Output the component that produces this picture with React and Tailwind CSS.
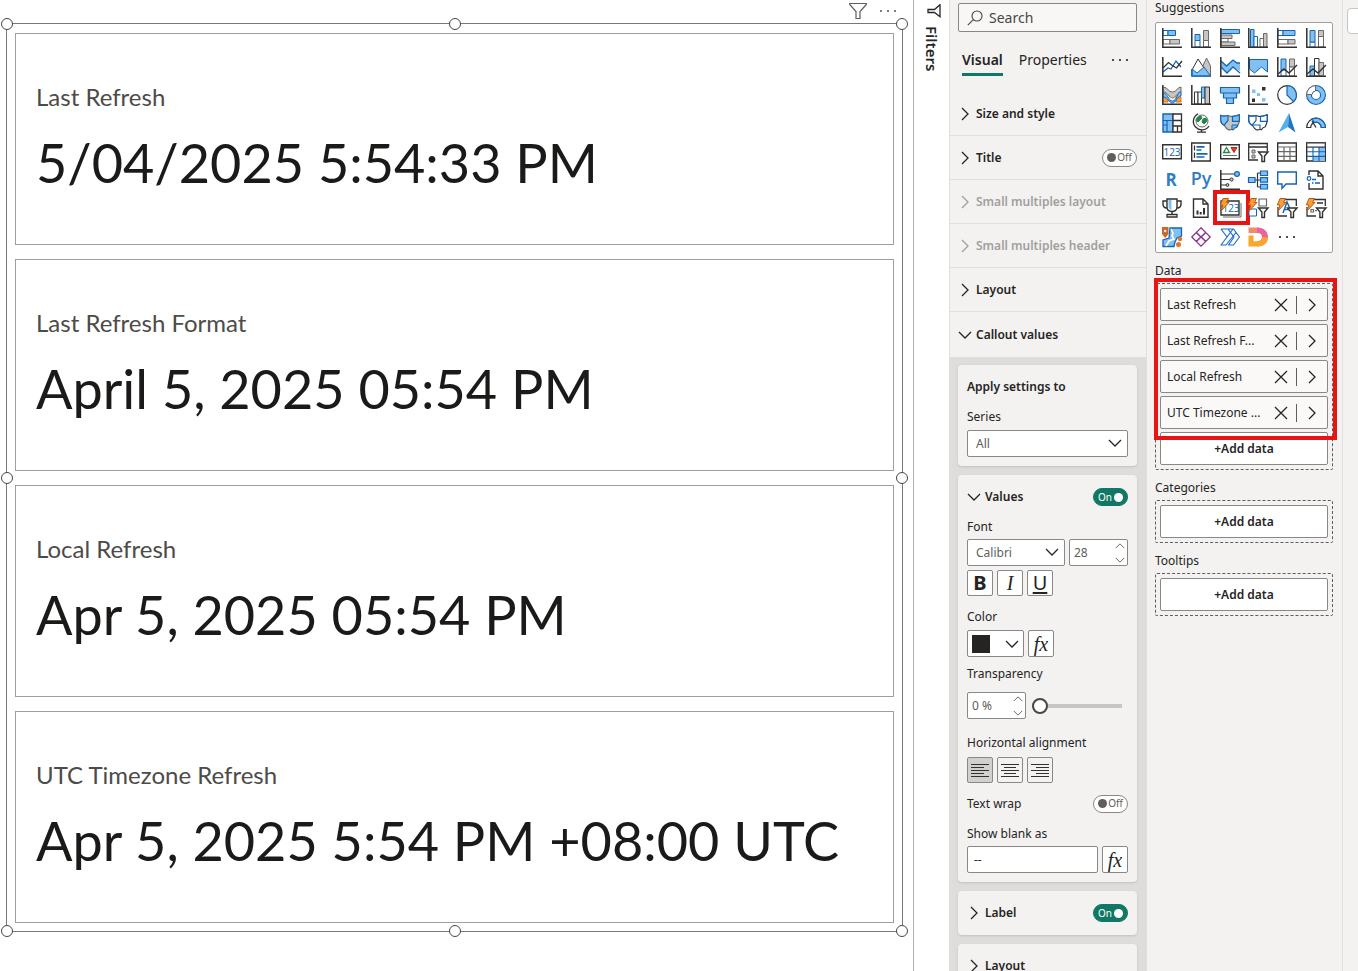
import { useState } from 'react';

const INK = '#323130';
const BLUE = '#1464b4';
const SKY = '#83c0f2';
const GRAY = '#c8c6c4';
const DIM = '#6b6967';
const ORANGE = '#f2a13c';

const Axes = () => <path d="M.8 0v19.2H20" fill="none" stroke={INK} strokeWidth="1.5" />;

const Funnel = () => (
  <path d="M10.5 10h9.500l-3.500 4v5.500h-2.600V14z" fill="#fff" stroke={INK} strokeWidth="1.4" />
);

const Bolt = () => (
  <path d="M3 .5h5.500L6.500 4.500H9L1 13l2-6H.3z" fill={ORANGE} stroke="#c05a12" strokeWidth="1" />
);

const VISUALS = [
  ['Stacked bar chart', <>
    <path d="M1 2.5h5v5H1z" fill="#fff" stroke={BLUE} />
    <path d="M6 2.5h7.5v5H6z" fill={SKY} stroke={BLUE} />
    <path d="M1 11.5h7v4.5H1z" fill="#fff" stroke={DIM} />
    <path d="M8 11.5h9.5v4.5H8z" fill={GRAY} stroke={DIM} />
    <Axes />
  </>],
  ['Stacked column chart', <>
    <path d="M4 12.5h5V19H4z" fill="#fff" stroke={BLUE} />
    <path d="M4 6.5h5v6H4z" fill={SKY} stroke={BLUE} />
    <path d="M12.5 12.5h5V19h-5z" fill="#fff" stroke={DIM} />
    <path d="M12.5 2.5h5v10h-5z" fill={GRAY} stroke={DIM} />
    <Axes />
  </>],
  ['Clustered bar chart', <>
    <path d="M1 1.5h18.5v4H1z" fill={SKY} stroke={BLUE} />
    <path d="M1 7h11v3.500H1z" fill={GRAY} stroke={DIM} />
    <path d="M1 10.500h7V14H1z" fill="#fff" stroke={DIM} />
    <path d="M1 14h14v3.500H1z" fill={GRAY} stroke={DIM} />
    <Axes />
  </>],
  ['Clustered column chart', <>
    <path d="M2.500 1.500H6V19H2.500z" fill={SKY} stroke={BLUE} />
    <path d="M6 8.500h3.500V19H6z" fill="#fff" stroke={BLUE} />
    <path d="M12 10.500h3.500V19H12z" fill="#fff" stroke={DIM} />
    <path d="M15.500 5.500H19V19h-3.500z" fill={GRAY} stroke={DIM} />
    <Axes />
  </>],
  ['100% stacked bar chart', <>
    <path d="M1 2.5h5v5H1z" fill="#fff" stroke={BLUE} />
    <path d="M6 2.5h12v5H6z" fill={SKY} stroke={BLUE} />
    <path d="M1 11.5h10v4.5H1z" fill="#fff" stroke={DIM} />
    <path d="M11 11.5h7v4.5h-7z" fill={GRAY} stroke={DIM} />
    <Axes />
  </>],
  ['100% stacked column chart', <>
    <path d="M4 14h5v5H4z" fill="#fff" stroke={BLUE} />
    <path d="M4 2.5h5V14H4z" fill={SKY} stroke={BLUE} />
    <path d="M12.5 8.5h5V19h-5z" fill="#fff" stroke={DIM} />
    <path d="M12.5 2.5h5v6h-5z" fill={GRAY} stroke={DIM} />
    <Axes />
  </>],
  ['Line chart', <>
    <path d="M1 15l5-4 3 1 5-8 5 6" fill="none" stroke={BLUE} strokeWidth="1.3" />
    <path d="M1 11l5.500-5.500L11 9l3.500 2L20 4" fill="none" stroke={INK} strokeWidth="1.3" />
    <Axes />
  </>],
  ['Area chart', <>
    <path d="M10 13l5.500-12L19.500 9v10z" fill={GRAY} stroke={DIM} />
    <path d="M1 13l6-11 6 9-4 5" fill="#fff" stroke={INK} />
    <path d="M1 12l5 4 7-6 6.500 9H1z" fill={SKY} stroke={BLUE} />
    <path d="M.8 12v7.200H20" fill="none" stroke={BLUE} strokeWidth="1.3" />
  </>],
  ['Stacked area chart', <>
    <path d="M1 4l5.500 5 6.500-6 4 3h3v8l-7-4-6 6-6-6z" fill={SKY} />
    <path d="M1 4l5.500 5 6.500-6 4 3h3M1 10l6 6 6-6 7 6" fill="none" stroke={BLUE} strokeWidth="1.3" />
    <Axes />
  </>],
  ['100% stacked area chart', <>
    <path d="M1.500 2.500h18V15l-6-5-7 6-5-4z" fill={SKY} stroke={BLUE} />
    <Axes />
  </>],
  ['Line and stacked column chart', <>
    <path d="M4 2h5v11H4z" fill={SKY} stroke={BLUE} />
    <path d="M4 13h5v6H4z" fill="#fff" stroke={BLUE} />
    <path d="M12.500 2h5v8h-5z" fill={GRAY} stroke={DIM} />
    <path d="M12.500 10h5v9h-5z" fill="#fff" stroke={DIM} />
    <path d="M1 17l6-5 5 4 8-8" fill="none" stroke={INK} strokeWidth="1.400" />
    <Axes />
  </>],
  ['Line and clustered column chart', <>
    <path d="M4 9h4.500v10H4z" fill={SKY} stroke={BLUE} />
    <path d="M8.500 1.500H13V19H8.500z" fill="#fff" stroke={INK} />
    <path d="M13 5.500h4.500V19H13z" fill={GRAY} stroke={DIM} />
    <path d="M1 17l6-5 5 4 8-8" fill="none" stroke={INK} strokeWidth="1.400" />
    <Axes />
  </>],
  ['Ribbon chart', <>
    <path d="M1 2c5 0 5 5 9.500 5S15 2 19 2v5c-4 0-5 6-8.500 6S6 7 1 7z" fill={GRAY} stroke={DIM} />
    <path d="M1 12h5v5H1zM14 12h5v5h-5z" fill={ORANGE} stroke="#d9731a" />
    <path d="M1 8c5 0 5 8 9.500 8S15 7 19 7v4c-4 0-5 7-8.500 7S6 12 1 12z" fill={SKY} stroke={BLUE} />
    <Axes />
  </>],
  ['Waterfall chart', <>
    <path d="M3.500 7H7v12H3.500z" fill="#fff" stroke={INK} />
    <path d="M7 7h3.500v12H7z" fill="#fff" stroke={INK} />
    <path d="M10.500 2H14v11h-3.500z" fill={SKY} stroke={BLUE} />
    <path d="M14 2h4.500v17H14z" fill={GRAY} stroke={INK} />
    <Axes />
  </>],
  ['Funnel', <>
    <path d="M.5 2.500h19V8H.5zM3.500 8h13v5h-13zM6.500 13h7v5.500h-7z" fill={SKY} stroke={BLUE} strokeWidth="1.200" />
  </>],
  ['Scatter chart', <>
    <path d="M4 4.500h3.500V8H4zM9 8h3v3H9zM14 13h3.500v3.500H14z" fill={SKY} />
    <path d="M14 2h3.500v3.500H14zM4 13.500h3V17H4z" fill={INK} />
    <Axes />
  </>],
  ['Pie chart', <>
    <circle cx="10" cy="10" r="9.300" fill="#fff" stroke={INK} strokeWidth="1.200" />
    <path d="M10 .7a9.300 9.300 0 0 1 6.600 15.900L10 10z" fill={SKY} stroke={BLUE} strokeWidth="1.200" />
  </>],
  ['Donut chart', <>
    <circle cx="10" cy="10" r="7" fill="none" stroke={BLUE} strokeWidth="6" />
    <circle cx="10" cy="10" r="7" fill="none" stroke={SKY} strokeWidth="3.800" />
    <path d="M.6 9.500A9.400 9.400 0 0 1 9.500.6V6A4 4 0 0 0 6 9.500z" fill="#fff" stroke={DIM} />
  </>],
  ['Treemap', <>
    <path d="M1 1h10v18H1z" fill={SKY} stroke={BLUE} strokeWidth="1.400" />
    <path d="M1 7.500h10M5 7.500V19M1 12h4" stroke={BLUE} fill="none" strokeWidth="1.200" />
    <path d="M11 1h8.500v18H11zM11 7.500h8.500M11 13h8.500M15.500 13v6" fill="#fff" stroke={INK} strokeWidth="1.300" />
  </>],
  ['Map', <>
    <circle cx="11" cy="8" r="6" fill="#fff" stroke={DIM} />
    <path d="M7 4l3-1 1 2-2 2-2 2-2-2zM12 6l3-1 1 3-3 3-2-2z" fill="#1e8a4a" stroke="#1e8a4a" />
    <path d="M7 .8A8.500 8.500 0 1 0 18 13M10.500 16.500V19M6 19.200h9" fill="none" stroke={INK} strokeWidth="1.300" />
  </>],
  ['Filled map', <>
    <path d="M.7 2.500c3 1.500 7-.5 9 .5s5 .5 9.600-1.200v6.500l-2 5.500c-2 .5-3 1-4 3-2-1-3 .5-5 0-2-1-3-3-4-4.500C2 11 .7 9 .7 7z" fill={GRAY} stroke={DIM} strokeWidth="1.200" />
    <path d="M.7 2.500c3 1.500 5 .5 7.300 0v5l-4 4.800C2 11 .7 9 .7 7zM12.500 3.300c2.500 0 4.500-.5 6.800-1.500v6.500h-6.800z" fill={SKY} stroke={BLUE} strokeWidth="1.200" />
    <path d="M12 12h5.500l-.5 2c-2 .5-3 1-4 3l-1-.5z" fill={SKY} stroke={BLUE} />
  </>],
  ['Shape map', <>
    <path d="M.7 2.500c3 1.500 7-.5 9 .5s5 .5 9.600-1.200v6.500l-2 5.500c-2 .5-3 1-4 3-2-1-3 .5-5 0-2-1-3-3-4-4.500C2 11 .7 9 .7 7z" fill="#fff" stroke={INK} strokeWidth="1.100" />
    <path d="M.7 2.500c3 1.500 5 .5 7.300 0v5l-4 4.800C2 11 .7 9 .7 7zM12.500 3.300c2.500 0 4.500-.5 6.800-1.500v6.500h-6.800zM5 12h7v4.500" fill="none" stroke={BLUE} strokeWidth="1.200" />
  </>],
  ['Azure map', <>
    <path d="M12 0L1.500 19.500 11 14z" fill="#50b4e8" />
    <path d="M12 0l6.500 19.500L11 14z" fill="#1f77c4" />
  </>],
  ['Gauge', <>
    <path d="M.7 14.500a9.300 9.300 0 0 1 18.600 0h-4a5.300 5.300 0 0 0-10.600 0z" fill="#fff" stroke={INK} strokeWidth="1.200" />
    <path d="M6 6.100a9.300 9.300 0 0 1 13.300 8.400h-4a5.300 5.300 0 0 0-7-5z" fill={SKY} stroke={BLUE} strokeWidth="1.200" />
    <path d="M10 14.500L6 8" stroke={INK} strokeWidth="1.300" />
  </>],
  ['Card', <>
    <path d="M.7 2.700h18.600v14H.7z" fill="#fff" stroke={INK} strokeWidth="1.400" />
    <text x="10" y="13.500" fontSize="10" textAnchor="middle" fill={BLUE}>123</text>
  </>],
  ['Multi-row card', <>
    <path d="M.7 1h18.600v18H.7z" fill="#fff" stroke={INK} strokeWidth="1.400" />
    <path d="M3.500 3.500v5M3.500 10.500v5.500" stroke={INK} strokeWidth="1.200" />
    <path d="M5.500 4.800h8M5.500 8h5M5.500 11.800h11M5.500 15h8" stroke={BLUE} strokeWidth="1.700" />
  </>],
  ['KPI', <>
    <path d="M.7 2.700h18.600v14H.7z" fill="#fff" stroke={INK} strokeWidth="1.400" />
    <path d="M3.500 10.500l3-5 3 5z" fill="#fff" stroke="#1e8a4a" strokeWidth="1.300" />
    <path d="M11 5.500h6l-3 5z" fill="#e23b3b" stroke="#c42020" />
    <path d="M3 13.500h14" stroke={DIM} />
  </>],
  ['Slicer', <>
    <path d="M10 18H.7V1.500h18.600V9M.7 5h18.600" fill="none" stroke={INK} strokeWidth="1.300" />
    <path d="M4 8h3v3H4zM4 13h3v3H4z" fill={GRAY} stroke={DIM} />
    <Funnel />
  </>],
  ['Table', <>
    <path d="M.7 1h18.600v18H.7z" fill="#fff" stroke={INK} strokeWidth="1.400" />
    <path d="M1 5h18M1 9.700h18M1 14.400h18M7 5v14M13 5v14" stroke={DIM} strokeWidth="1.200" />
  </>],
  ['Matrix', <>
    <path d="M.7 1h18.600v18H.7z" fill="#fff" stroke={INK} strokeWidth="1.400" />
    <path d="M13 5h6v14H7v-4.600h6z" fill={SKY} />
    <path d="M1 5h18M1 9.700h18M1 14.400h18M7 5v14M13 5v14" stroke={BLUE} strokeWidth="1.100" />
    <path d="M.7 5V1h18.600v4z" fill="#fff" stroke={INK} strokeWidth="1.200" />
  </>],
  ['R script visual', <text x="9" y="16" fontSize="17" fontWeight="700" textAnchor="middle" fill="#2f7fc0">R</text>],
  ['Python visual', <text x="10" y="15" fontSize="18" fontWeight="600" textAnchor="middle" fill="#2f7fc0">Py</text>],
  ['Key influencers', <>
    <path d="M1 4h14M1 9.500h9M1 15h5" stroke={INK} strokeWidth="1.200" />
    <circle cx="17" cy="4" r="2.400" fill={SKY} stroke={BLUE} strokeWidth="1.200" />
    <circle cx="11.500" cy="9.500" r="1.600" fill={GRAY} stroke={INK} />
    <circle cx="7.500" cy="15" r="1.400" fill={GRAY} stroke={INK} />
    <Axes />
  </>],
  ['Decomposition tree', <>
    <path d="M7 10h5M9.500 3v14M9.500 3h3M9.500 17h3" fill="none" stroke={INK} strokeWidth="1.200" />
    <path d="M.5 7.500H7v5H.5z" fill={SKY} stroke={BLUE} strokeWidth="1.200" />
    <path d="M12.500 1h7v4.500h-7zM12.500 7.700h7v4.500h-7zM12.500 14.400h7V19h-7z" fill={SKY} stroke={BLUE} strokeWidth="1.200" />
  </>],
  ['Q&A', <path d="M.7 2h18.600v12H9l-4 4.500V14H.7z" fill="#fff" stroke={BLUE} strokeWidth="1.400" />],
  ['Narrative', <>
    <path d="M3 5V1h9l5 5v13H3v-6M12 1v5h5" fill="none" stroke={INK} strokeWidth="1.400" />
    <circle cx="3" cy="8.500" r="1.800" fill="#fff" stroke={BLUE} strokeWidth="1.200" />
    <path d="M6 9.500h4M9 13h5M6 13h1.500" stroke={BLUE} strokeWidth="1.500" />
  </>],
  ['Metrics', <>
    <path d="M5 3H1v3c0 3 2 4 4 4M15 3h4v3c0 3-2 4-4 4M10 13v5" fill="none" stroke={INK} strokeWidth="1.400" />
    <path d="M5 1h10v8c0 3-2 4.500-5 4.500S5 12 5 9z" fill="#fff" stroke={INK} strokeWidth="1.400" />
    <path d="M6.500 2h3v10c-2-.5-3-1.500-3-4z" fill={SKY} />
    <path d="M5 19h10v-2.500H5z" fill="#fff" stroke={INK} strokeWidth="1.300" />
  </>],
  ['Paginated report', <>
    <path d="M2.500 1H12l5 5v13.300H2.500zM12 1v5h5" fill="#fff" stroke={INK} strokeWidth="1.400" />
    <path d="M6.500 12.500v4M9.700 14v2.500M13 10v6.500" stroke={INK} strokeWidth="2" />
  </>],
  ['Card (new)', <>
    <path d="M1 3h18v14H1z" fill="#fff" stroke={INK} strokeWidth="1.400" />
    <path d="M3 19h18V5" fill="none" stroke={DIM} />
    <text x="11" y="14" fontSize="10" textAnchor="middle" fill={BLUE}>123</text>
    <Bolt />
  </>],
  ['Button slicer', <>
    <path d="M11 1h7.500v7H11z" fill="#fff" stroke={DIM} strokeWidth="1.200" />
    <path d="M1 11h7.500v7H1z" fill="#fff" stroke={BLUE} />
    <Funnel />
    <Bolt />
  </>],
  ['Text slicer', <>
    <path d="M8 1.500h11.300V8M1 9v9h9" fill="none" stroke={INK} strokeWidth="1.300" />
    <path d="M6 15L10 4l3.500 8M7.500 11.500h5" fill="none" stroke={BLUE} strokeWidth="1.400" />
    <Funnel />
    <Bolt />
  </>],
  ['List slicer', <>
    <path d="M8 1.500h11.300V8M1 9v9h9M11 5h6" fill="none" stroke={INK} strokeWidth="1.300" />
    <path d="M5 11.500h2.500V14H5zM9 12.700h2" fill="none" stroke={DIM} strokeWidth="1.200" />
    <Funnel />
    <Bolt />
  </>],
  ['ArcGIS Maps', <>
    <path d="M8 1h11.500v8L15 11l-2 4-1 4.500H1V13l6-2z" fill={SKY} stroke={BLUE} strokeWidth="1.300" />
    <path d="M9 2l2 4-1 3 2 3-5 2-3 5" fill="none" stroke="#fff" strokeWidth="1.600" />
    <path d="M0 0h6.500v7L3.200 11 0 7z" fill="#c9682c" />
    <circle cx="3.200" cy="4" r="1.200" fill="#fff" />
    <circle cx="18" cy="12" r="2.200" fill="#d9762f" />
    <circle cx="16.500" cy="17.500" r="2.500" fill="#d9762f" />
  </>],
  ['Power Apps', <>
    <path d="M10 .8l4.600 4.600L10 10 5.400 5.400zM5.200 5.600L9.800 10l-4.600 4.400L.8 10zM14.800 5.600L19.200 10l-4.400 4.400L10.200 10zM10 10l4.600 4.600L10 19.200l-4.600-4.600z" fill="#fff" stroke="#86318f" strokeWidth="1.300" />
  </>],
  ['Power Automate', <>
    <path d="M1 2h12.500l6 8-6 8H8.500L14 10 8 2M1 2l6 8-6 8h5L16 5.500" fill="#fff" stroke="#1b6fd0" strokeWidth="1.200" strokeLinejoin="round" />
    <path d="M7 10L13 2" fill="none" stroke="#1b6fd0" strokeWidth="1.200" />
  </>],
  ['Dynamics visual', <>
    <path d="M.5.5H11v5.500H.5z" fill="#f48a6b" />
    <path d="M9 .5c7 0 11 4 11 9.500s-4 9.500-11 9.500v-5.300c3.500 0 5-1.700 5-4.200s-1.500-4-5-4z" fill="#e8649c" />
    <path d="M.5 8.500h5v5.700H9c4 0 5-2 5-4.200l6 .5c-.5 5.500-4.500 9-10.500 9h-9z" fill="#fba52a" />
  </>],
];

const SECTIONS = [
  { title: 'Size and style' },
  { title: 'Title', toggle: true },
  { title: 'Small multiples layout', disabled: true },
  { title: 'Small multiples header', disabled: true },
  { title: 'Layout' },
];

const CARDS = [
  { label: 'Last Refresh', value: '5/04/2025 5:54:33 PM' },
  { label: 'Last Refresh Format', value: 'April 5, 2025 05:54 PM' },
  { label: 'Local Refresh', value: 'Apr 5, 2025 05:54 PM' },
  { label: 'UTC Timezone Refresh', value: 'Apr 5, 2025 5:54 PM +08:00 UTC' },
];

const FIELDS = ['Last Refresh', 'Last Refresh F...', 'Local Refresh', 'UTC Timezone ...'];

const HANDLES = [
  'left-0 top-0',
  'left-1/2 top-0',
  'left-full top-0',
  'left-0 top-1/2',
  'left-full top-1/2',
  'left-0 top-full',
  'left-1/2 top-full',
  'left-full top-full',
];

function Chevron({ dir = 'right', className = 'size-3.5' }) {
  const paths = {
    right: 'M4 1l6 6-6 6',
    down: 'M1 4l6 6 6-6',
    up: 'M1 10l6-6 6 6',
  };
  return (
    <svg viewBox="0 0 14 14" className={className} fill="none" stroke="currentColor" strokeWidth="1.3" aria-hidden="true">
      <path d={paths[dir]} />
    </svg>
  );
}

function Dots({ className }) {
  return (
    <svg viewBox="0 0 18 4" className={className} fill="currentColor" aria-hidden="true">
      <circle cx="2" cy="2" r="1.1" />
      <circle cx="9" cy="2" r="1.1" />
      <circle cx="16" cy="2" r="1.1" />
    </svg>
  );
}

function Toggle({ label, defaultOn = false }) {
  const [on, setOn] = useState(defaultOn);
  return (
    <button
      type="button"
      role="switch"
      aria-checked={on}
      aria-label={label}
      onClick={() => setOn(!on)}
      className={`flex h-[18px] w-[35px] shrink-0 items-center justify-between rounded-full border px-1 text-[10px] ${
        on ? 'flex-row-reverse border-[#117865] bg-[#117865] text-white' : 'border-[#8a8886] bg-white text-[#605e5c]'
      }`}
    >
      <span className={`size-[9px] rounded-full ${on ? 'bg-white' : 'bg-[#605e5c]'}`}></span>
      <span>{on ? 'On' : 'Off'}</span>
    </button>
  );
}

function Stepper({ id, label, value, className }) {
  const [current, setCurrent] = useState(value);
  const step = (by) => {
    const next = parseInt(current, 10) + by;
    setCurrent(current.includes('%') ? `${next} %` : `${next}`);
  };
  return (
    <div className={`flex h-[27px] rounded-xs border border-[#8a8886] bg-white text-[#605e5c] ${className}`}>
      <input
        id={id}
        aria-label={label}
        value={current}
        onChange={(e) => setCurrent(e.target.value)}
        className="w-full min-w-0 flex-1 pl-1 text-xs outline-none"
      />
      <div className="flex w-3.5 shrink-0 flex-col items-center justify-center gap-1">
        <button type="button" aria-label="Increase" onClick={() => step(1)}><Chevron dir="up" className="size-2.5" /></button>
        <button type="button" aria-label="Decrease" onClick={() => step(-1)}><Chevron dir="down" className="size-2.5" /></button>
      </div>
    </div>
  );
}

function Select({ id, label, options, className }) {
  return (
    <div className={`relative ${className}`}>
      <select
        id={id}
        aria-label={label}
        className="h-[27px] w-full appearance-none rounded-xs border border-[#8a8886] bg-white pl-2 text-xs text-[#605e5c]"
      >
        {options.map((o) => <option key={o}>{o}</option>)}
      </select>
      <Chevron dir="down" className="pointer-events-none absolute right-1.5 top-1.5 size-3.5" />
    </div>
  );
}

function FxButton({ label }) {
  return (
    <button
      type="button"
      aria-label={label}
      className="h-[27px] w-[26px] shrink-0 rounded-xs border border-[#8a8886] bg-white font-['Liberation_Serif',serif] text-xl leading-none italic"
    >
      fx
    </button>
  );
}

function IconButton({ label, active, className = '', children }) {
  return (
    <button
      type="button"
      aria-label={label}
      aria-pressed={!!active}
      className={`flex size-[26px] items-center justify-center rounded-xs border border-[#8a8886] ${className}`}
    >
      {children}
    </button>
  );
}

const ALIGN = [
  ['Align left', 'M0 1.500h18M0 4.500h13M0 7.500h18M0 10.500h13M0 13.500h18'],
  ['Align center', 'M0 1.500h18M3 4.500h12M0 7.500h18M3 10.500h12M0 13.500h18'],
  ['Align right', 'M0 1.500h18M5 4.500h13M0 7.500h18M5 10.500h13M0 13.500h18'],
];

function Canvas() {
  return (
    <main className="min-w-0 flex-1 border-r border-[#b3b0ad] bg-white pr-[10px] pl-[6px]">
      <div className="flex h-[23px] items-start justify-end gap-3 pt-0.5 pr-1.5 text-[#605e5c]">
        <button type="button" aria-label="Filters on visual">
          <svg viewBox="0 0 18 18" className="size-[18px]" fill="none" stroke="currentColor" strokeWidth="1.2">
            <path d="M.7 1.500h16.600v1L11 9.500v7H7v-7l-6.300-7z" />
          </svg>
        </button>
        <button type="button" aria-label="More options" className="py-[7px]">
          <Dots className="h-1 w-[18px]" />
        </button>
      </div>

      <div className="relative flex flex-col gap-3.5 border border-[#7a7876] px-2 pt-[9px] pb-2">
        {CARDS.map((card) => (
          <section key={card.label} className="flex h-[212px] flex-col justify-center border border-[#a19f9d] px-5 pt-4 font-['Lato',sans-serif]">
            <h2 className="text-[24px] leading-7 text-[#4d4b49]">{card.label}</h2>
            <p className="pt-4 pb-3 text-[54px] leading-[72px] whitespace-nowrap text-[#1b1a19]">{card.value}</p>
          </section>
        ))}
        {HANDLES.map((pos) => (
          <span key={pos} className={`absolute size-3 -translate-1/2 rounded-full border-[1.5px] border-[#484644] bg-white ${pos}`}></span>
        ))}
      </div>
    </main>
  );
}

function FormatPane() {
  const [transparency, setTransparency] = useState(0);
  return (
    <aside className="w-[198px] shrink-0 border-x border-[#e1dfdd] bg-[#f3f2f1]">
      <div className="pt-[3px] pr-[9px] pl-2">
        <label className="flex h-[29px] items-center gap-1.5 rounded-xs border border-[#8a8886] bg-white/40 px-2">
          <svg viewBox="0 0 16 16" className="size-4 shrink-0" fill="none" stroke="#484644" strokeWidth="1.1" aria-hidden="true">
            <circle cx="10" cy="6" r="5" />
            <path d="M6.400 9.600L.8 15.200" />
          </svg>
          <input type="search" aria-label="Search" placeholder="Search" className="w-full min-w-0 text-sm outline-none placeholder:text-[#484644]" />
        </label>
      </div>

      <nav className="flex h-[60px] items-start gap-4 pt-[18px] pr-[13px] pl-3 text-sm leading-5">
        <button type="button" className="border-b-3 border-[#117865] pb-[3px] font-semibold">Visual</button>
        <button type="button">Properties</button>
        <button type="button" aria-label="More options" className="ml-auto py-2 pr-1">
          <Dots className="h-1 w-[18px]" />
        </button>
      </nav>

      {SECTIONS.map((s) => (
        <div key={s.title} className={`flex h-11 items-center justify-between border-b border-[#e1dfdd] pr-[9px] pl-2 ${s.disabled ? 'text-[#a19f9d]' : ''}`}>
          <button type="button" disabled={s.disabled} className="flex items-center gap-1 font-semibold">
            <Chevron />
            {s.title}
          </button>
          {s.toggle && <Toggle label={s.title} />}
        </div>
      ))}
      <button type="button" className="flex h-[45px] w-full items-center gap-1 px-2 text-left font-semibold">
        <Chevron dir="down" />
        Callout values
      </button>

      <div className="flex flex-col gap-[9px] bg-[#dfdddb] py-2 pr-[9px] pl-2">
        <section className="rounded-sm bg-[#f3f2f1] px-[9px] pt-3 pb-[9px] shadow-sm">
          <h3 className="leading-5 font-semibold">Apply settings to</h3>
          <label htmlFor="series" className="block pt-2.5 pb-[3px] leading-5">Series</label>
          <Select id="series" options={['All']} />
        </section>

        <section className="rounded-sm bg-[#f3f2f1] px-[9px] pt-3 pb-[9px] shadow-sm">
          <div className="flex h-5 items-center justify-between">
            <button type="button" className="flex items-center gap-1 font-semibold">
              <Chevron dir="down" />
              Values
            </button>
            <Toggle label="Values" defaultOn />
          </div>
          <label htmlFor="font" className="block pt-2.5 pb-0.5 leading-5">Font</label>
          <div className="flex gap-1">
            <Select id="font" options={['Calibri', 'Segoe UI']} className="min-w-0 flex-1" />
            <Stepper label="Font size" value="28" className="w-[59px] shrink-0" />
          </div>
          <div className="flex gap-1 pt-1">
            <IconButton label="Bold" className="bg-white text-xl leading-none font-bold">B</IconButton>
            <IconButton label="Italic" className="bg-white font-['Liberation_Serif',serif] text-xl leading-none italic">I</IconButton>
            <IconButton label="Underline" className="bg-white text-xl leading-none underline underline-offset-2">U</IconButton>
          </div>

          <h4 className="pt-[11px] pb-[3px] leading-5">Color</h4>
          <div className="flex gap-1">
            <button type="button" aria-label="Color" className="flex h-[27px] w-[57px] items-center justify-between rounded-xs border border-[#8a8886] bg-white px-1">
              <span className="size-[18px] bg-[#252423]"></span>
              <Chevron dir="down" />
            </button>
            <FxButton label="Conditional color" />
          </div>

          <label htmlFor="transparency" className="block pt-[7px] pb-2 leading-5">Transparency</label>
          <div className="flex items-center gap-1.5">
            <Stepper id="transparency" value="0 %" className="w-[59px] shrink-0" />
            <input
              type="range"
              aria-label="Transparency slider"
              min="0"
              max="100"
              value={transparency}
              onChange={(e) => setTransparency(e.target.value)}
              className="h-4 w-[90px] appearance-none [&::-webkit-slider-runnable-track]:h-1 [&::-webkit-slider-runnable-track]:bg-[#c8c6c4] [&::-webkit-slider-thumb]:-mt-1.5 [&::-webkit-slider-thumb]:size-4 [&::-webkit-slider-thumb]:appearance-none [&::-webkit-slider-thumb]:rounded-full [&::-webkit-slider-thumb]:border-2 [&::-webkit-slider-thumb]:border-[#484644] [&::-webkit-slider-thumb]:bg-white"
            />
          </div>

          <h4 className="pt-[14px] pb-1 leading-5">Horizontal alignment</h4>
          <div className="flex gap-1">
            {ALIGN.map(([label, d], i) => (
              <IconButton key={label} label={label} active={i === 0} className={i === 0 ? 'bg-[#d2d0ce]' : ''}>
                <svg viewBox="0 0 18 15" className="h-[15px] w-[18px]" stroke="#323130" strokeWidth="1.1" aria-hidden="true">
                  <path d={d} />
                </svg>
              </IconButton>
            ))}
          </div>

          <div className="flex h-[41px] items-center justify-between">
            Text wrap
            <Toggle label="Text wrap" />
          </div>
          <label htmlFor="blank" className="block pb-0.5 leading-5">Show blank as</label>
          <div className="flex gap-1">
            <input id="blank" defaultValue="--" className="h-[27px] min-w-0 flex-1 rounded-xs border border-[#8a8886] bg-white px-1.5" />
            <FxButton label="Conditional blank value" />
          </div>
        </section>

        <section className="flex h-11 items-center justify-between rounded-sm bg-[#f3f2f1] px-[9px] shadow-sm">
          <button type="button" className="flex items-center gap-1 font-semibold">
            <Chevron />
            Label
          </button>
          <Toggle label="Label" defaultOn />
        </section>
        <section className="flex h-11 items-center rounded-sm bg-[#f3f2f1] px-[9px] shadow-sm">
          <button type="button" className="flex items-center gap-1 leading-4 font-semibold">
            <Chevron />
            Layout
          </button>
        </section>
      </div>
    </aside>
  );
}

function AddData() {
  return (
    <button type="button" className="h-[33px] w-full rounded-xs border border-[#8a8886] bg-white font-semibold">
      +Add data
    </button>
  );
}

function BuildPane() {
  return (
    <aside className="w-[196px] shrink-0 border-r border-[#e1dfdd] bg-[#f3f2f1] pr-[9px] pl-2">
      <h3 className="h-[22px] leading-4">Suggestions</h3>
      <div className="grid h-[231px] grid-cols-6 grid-rows-8 rounded-xs border border-[#a19f9d] bg-white px-0.5 py-px">
        {VISUALS.map(([name, icon]) => (
          <button key={name} type="button" aria-label={name} className="relative flex items-center justify-center">
            <svg viewBox="0 0 20 20" className="size-5 overflow-visible font-['Open_Sans',sans-serif]">{icon}</svg>
            {name === 'Card (new)' && <span className="absolute -top-1 -right-1.5 -bottom-0.5 -left-0.5 border-4 border-[#e81313]"></span>}
          </button>
        ))}
        <button type="button" aria-label="Get more visuals" className="flex items-center justify-center">
          <Dots className="h-1 w-[18px]" />
        </button>
      </div>

      <h3 className="pt-2 pb-0.5 leading-5">Data</h3>
      <div className="relative rounded-xs border border-dashed border-[#605e5c] p-1">
        <div className="flex flex-col gap-[3px]">
          {FIELDS.map((name) => (
            <div key={name} className="flex h-[33px] items-center rounded-xs border border-[#8a8886] bg-[#faf9f8] pl-1.5">
              <span className="w-[99px] whitespace-nowrap">{name}</span>
              <button type="button" aria-label={`Remove ${name}`} className="ml-2">
                <svg viewBox="0 0 14 14" className="size-3.5" stroke="currentColor" strokeWidth="1.3">
                  <path d="M1 1l12 12M13 1L1 13" />
                </svg>
              </button>
              <span className="ml-2 h-[18px] border-l border-[#605e5c]"></span>
              <button type="button" aria-label={`${name} options`} className="ml-2">
                <Chevron />
              </button>
            </div>
          ))}
          <AddData />
        </div>
        <span className="pointer-events-none absolute -top-1.5 -right-[5px] bottom-[29px] -left-0.5 border-4 border-[#e81313]"></span>
      </div>

      {['Categories', 'Tooltips'].map((title) => (
        <div key={title}>
          <h3 className="pt-2 pb-0.5 leading-5">{title}</h3>
          <div className="rounded-xs border border-dashed border-[#605e5c] p-1">
            <AddData />
          </div>
        </div>
      ))}
    </aside>
  );
}

function App() {
  return (
    <div className="flex h-screen overflow-hidden bg-[#f3f2f1] font-['Noto_Sans',sans-serif] text-[12px] text-[#252423]">
      <Canvas />

      <div className="flex w-[35px] shrink-0 flex-col items-center gap-2 bg-white pt-1">
        <svg viewBox="0 0 14 14" className="ml-1 size-3.5" fill="none" stroke="currentColor" strokeWidth="1.3" aria-hidden="true">
          <path d="M13 .7v12L7.500 8.500H1v-3h6.500z" />
        </svg>
        <h2 className="text-[15px] leading-5 font-semibold [writing-mode:vertical-rl]">Filters</h2>
      </div>

      <FormatPane />
      <BuildPane />

      <aside className="w-[15px] shrink-0 overflow-hidden pt-2 pl-1">
        <input type="search" aria-label="Search data" className="h-[26px] w-40 rounded-sm border border-[#c8c6c4] bg-white" />
      </aside>
    </div>
  );
}

export default App;
